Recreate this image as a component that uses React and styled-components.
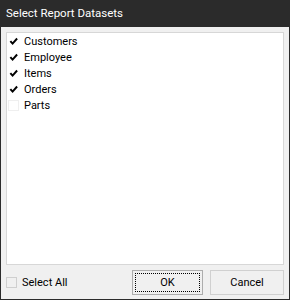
import { useState } from 'react';
import styled, { createGlobalStyle } from 'styled-components';

const Global = createGlobalStyle`
  html, body { margin: 0; padding: 0; background: #2b2b2b; }
  body { font-family: Roboto, "Liberation Sans", sans-serif; }
`;

const Window = styled.div`
  width: 290px;
  height: 300px;
  box-sizing: border-box;
  display: flex;
  flex-direction: column;
  background: #f0f0f0;
  border: 1px solid #2b2b2b;
  border-top: none;
`;

const TitleBar = styled.div`
  height: 27px;
  flex: none;
  background: #2b2b2b;
  color: #ffffff;
  font-size: 11.5px;
  line-height: 27px;
  padding-left: 6px;
  margin: 0 -1px;
`;

const Body = styled.div`
  flex: 1;
  display: flex;
  flex-direction: column;
  padding: 5px 5px 4px 5px;
  gap: 5px;
`;

const List = styled.div`
  flex: 1;
  background: #ffffff;
  border: 1px solid #d7d7d7;
  padding: 0 0 0 1px;
  display: flex;
  flex-direction: column;
`;

const Row = styled.label`
  height: 16px;
  display: flex;
  align-items: center;
  gap: 5px;
  font-size: 11px;
  color: #000;
`;

const Box = styled.span`
  width: 11px;
  height: 11px;
  box-sizing: border-box;
  border: 1px solid ${(p) => (p.$checked ? 'transparent' : p.$strong ? '#cfcfcf' : '#efefef')};
  background: ${(p) => (p.$strong ? '#f0f0f0' : '#fff')};
  display: flex;
  align-items: center;
  justify-content: center;
`;

const Footer = styled.div`
  height: 25px;
  flex: none;
  display: flex;
  align-items: center;
`;

const SelectAll = styled(Row)`
  flex: 1;
`;

const Button = styled.button`
  width: ${(p) => p.$w}px;
  height: 25px;
  margin-left: ${(p) => p.$gap}px;
  box-sizing: border-box;
  border: 1px solid ${(p) => (p.$focused ? '#adadad' : '#d0d0d0')};
  background: #f0f0f0;
  font-family: inherit;
  font-size: 11px;
  color: #000;
  padding: 2px;
  display: flex;
`;

const Focus = styled.span`
  flex: 1;
  display: flex;
  align-items: center;
  justify-content: center;
  border: 1px dotted ${(p) => (p.$on ? '#000' : 'transparent')};
`;

const Check = () => (
  <svg width="10" height="9" viewBox="0 0 10 9">
    <path d="M1.5 4 L4 6.8 L9 1.2" fill="none" stroke="#000" strokeWidth="2.2" />
  </svg>
);

const datasets = [
  { name: 'Customers', checked: true },
  { name: 'Employee', checked: true },
  { name: 'Items', checked: true },
  { name: 'Orders', checked: true },
  { name: 'Parts', checked: false },
];

export default function App() {
  const [items] = useState(datasets);
  return (
    <>
      <Global />
      <Window>
        <TitleBar>Select Report Datasets</TitleBar>
        <Body>
          <List>
            {items.map((d) => (
              <Row key={d.name}>
                <Box $checked={d.checked}>{d.checked && <Check />}</Box>
                {d.name}
              </Row>
            ))}
          </List>
          <Footer>
            <SelectAll>
              <Box $strong />
              Select All
            </SelectAll>
            <Button $focused $w={71} $gap={0}>
              <Focus $on>OK</Focus>
            </Button>
            <Button $w={74} $gap={7}>
              <Focus>Cancel</Focus>
            </Button>
          </Footer>
        </Body>
      </Window>
    </>
  );
}
